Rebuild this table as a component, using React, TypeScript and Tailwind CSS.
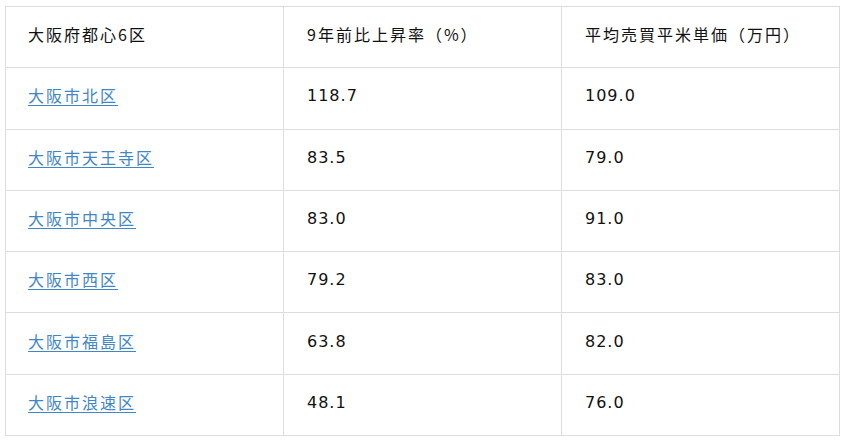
import React from "react";

const rows = [
  ["大阪市北区", "118.7", "109.0"],
  ["大阪市天王寺区", "83.5", "79.0"],
  ["大阪市中央区", "83.0", "91.0"],
  ["大阪市西区", "79.2", "83.0"],
  ["大阪市福島区", "63.8", "82.0"],
  ["大阪市浪速区", "48.1", "76.0"],
];

const num = { fontFamily: '"DejaVu Sans", "Noto Sans CJK JP", sans-serif' };

export default function App() {
  return (
    <div className="w-[847px] h-[443px] bg-white pt-[6px] pl-[5px]">
      <table
        className="border-collapse table-fixed w-[834px] text-[16px] tracking-[2px] text-[#111]"
        style={{ fontFamily: '"Noto Sans CJK JP", "Noto Sans", sans-serif' }}
      >
        <colgroup>
          <col className="w-[278px]" />
          <col className="w-[278px]" />
          <col className="w-[278px]" />
        </colgroup>
        <tbody>
          <tr className="h-[61.3px]">
            <td className="border border-[#ddd] pl-[22px] pb-[6px] align-middle">大阪府都心6区</td>
            <td className="border border-[#ddd] pl-[23px] pb-[6px] align-middle">9年前比上昇率（%）</td>
            <td className="border border-[#ddd] pl-[23px] pb-[6px] align-middle">平均売買平米単価（万円）</td>
          </tr>
          {rows.map((r) => (
            <tr key={r[0]} className="h-[61.3px]">
              <td className="border border-[#ddd] pl-[22px] pb-[6px] align-middle">
                <a href="#" className="text-[#3f87c9] underline underline-offset-[3px]">
                  {r[0]}
                </a>
              </td>
              <td className="border border-[#ddd] pl-[23px] pb-[6px] align-middle">
                <span className="tracking-[1px]" style={num}>{r[1]}</span>
              </td>
              <td className="border border-[#ddd] pl-[23px] pb-[6px] align-middle">
                <span className="tracking-[1px]" style={num}>{r[2]}</span>
              </td>
            </tr>
          ))}
        </tbody>
      </table>
    </div>
  );
}
